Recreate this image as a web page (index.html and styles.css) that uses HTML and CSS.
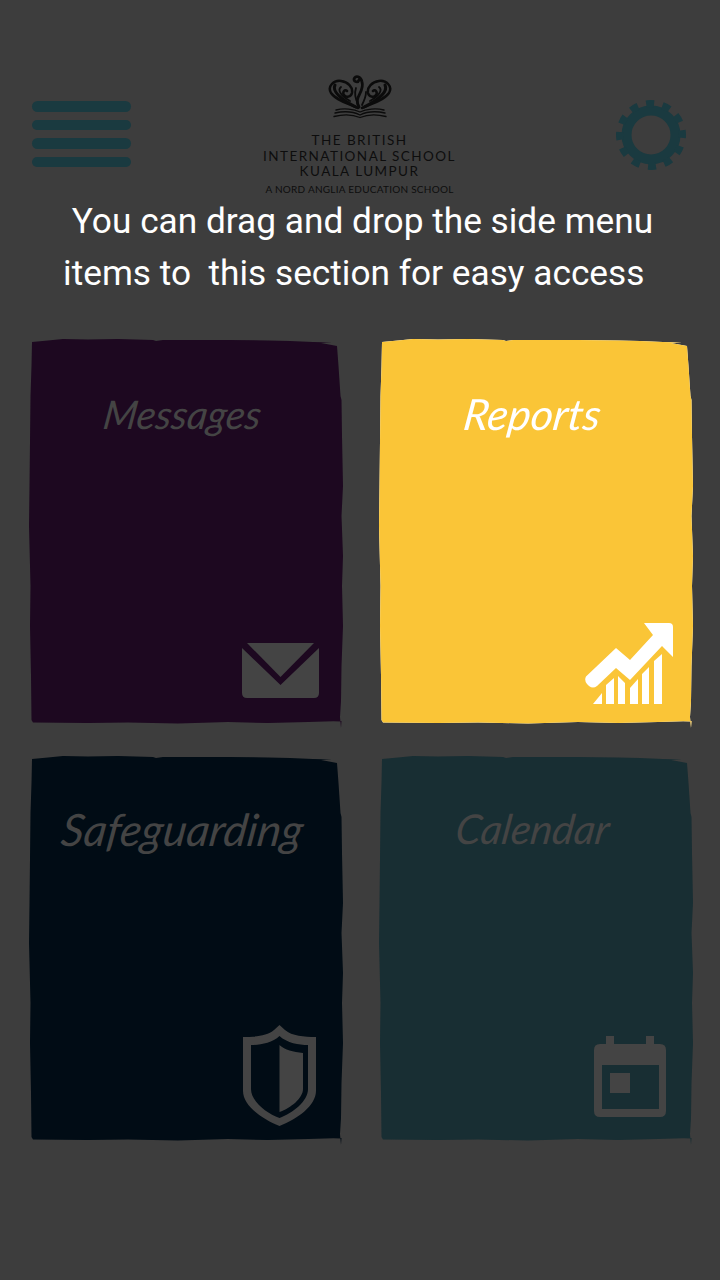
FILE: index.html
```html
<!DOCTYPE html>
<html lang="en">
<head>
<meta charset="utf-8">
<title>Home</title>
<link rel="stylesheet" href="styles.css">
</head>
<body>
<main class="screen">
  <header class="topbar">
    <div class="burger"><span></span><span></span><span></span><span></span></div>
    <div class="logo">
      <svg class="crest" viewBox="0 0 64 47" fill="none" stroke="#0b0b0b" stroke-linecap="round">
        <path d="M30 34C20 30 8 26 3 19C-1 12 6 6 13 7C20 8 25 13 24 19C23 23 18 24 16 21C14 18 17 15 19 17M34 34C44 30 56 26 61 19C65 12 58 6 51 7C44 8 39 13 40 19C41 23 46 24 48 21C50 18 47 15 45 17" stroke-width="2.500"/>
        <path d="M7 11C4 17 12 25 28 33M57 11C60 17 52 25 36 33" stroke-width="3"/>
        <path d="M13 13C9 16 13 22 22 27M51 13C55 16 51 22 42 27" stroke-width="1.800"/>
        <path d="M31 33C25 23 37 18 34 8C33 2 27 1 26 5C26 8 30 9 31 6" stroke-width="2.800"/>
        <path d="M28 14C26 20 28 26 30 30M38 18C38 23 36 27 34 31" stroke-width="1.800"/>
        <path d="M8 36C16 34 26 35 32 38C38 35 48 34 56 36M7 39C16 37 26 38 32 41C38 38 48 37 57 39M6 42.500C16 40 26 41 32 43.500C38 41 48 40 58 42.500" stroke-width="1.300"/>
      </svg>
      <p class="logo-line">THE BRITISH</p>
      <p class="logo-line">INTERNATIONAL SCHOOL</p>
      <p class="logo-line">KUALA LUMPUR</p>
      <p class="logo-tag">A NORD ANGLIA EDUCATION SCHOOL</p>
    </div>
    <svg class="gear" viewBox="-36 -36 72 72" aria-hidden="true">
      <circle class="gear-ring" r="24.500"/>
      <circle class="gear-teeth" r="31.500" transform="rotate(-2)"/>
    </svg>
  </header>

  <div class="intro">
    <p class="intro-line">You can drag and drop the side menu</p>
    <p class="intro-line">items to  this section for easy access  </p>
  </div>

  <section class="tiles">
    <article class="tile tile-messages">
      <div class="paint"></div>
      <h2 class="tile-title">Messages</h2>
      <svg class="tile-icon icon-mail" viewBox="0 0 77 55">
        <path d="M5 0H72L38.500 34Z"/>
        <path d="M0 5L38.500 42L77 5V50Q77 55 72 55H5Q0 55 0 50Z"/>
      </svg>
    </article>
    <article class="tile tile-reports">
      <div class="paint"></div>
      <h2 class="tile-title">Reports</h2>
      <svg class="tile-icon icon-chart" viewBox="0 0 90 82">
        <path d="M1 53.500L31 25L45 37L68 12L59 0H84Q88 0 88 4V34L77 23L45 57L31 45L12 63Q8 66 4 63L2 61Q-1 57 1 53.500Z"/>
        <path d="M8 81L17 70V81ZM21 81V62L29 55V81ZM33 81V53L40 60V81ZM45 81V65L53 56V81ZM57 81V51L64 44V81ZM69 81V38L77 31V81Z"/>
      </svg>
    </article>
    <article class="tile tile-safeguarding">
      <div class="paint"></div>
      <h2 class="tile-title">Safeguarding</h2>
      <svg class="tile-icon icon-shield" viewBox="0 0 76 102">
        <path fill-rule="evenodd" d="M37.500 0L43 5C50 11 62 12 74 12V66C74 80 56 94 37.500 101C19 94 1 80 1 66V12C13 12 25 11 32 5ZM37.500 11C30 18 18 20 9 20V64C9 76 24 88 37.500 93C51 88 66 76 66 64V20C57 20 45 18 37.500 11Z"/>
        <path d="M37.500 20C43 25 51 27 61 28V64C61 73 49 83 37.500 87Z"/>
      </svg>
    </article>
    <article class="tile tile-calendar">
      <div class="paint"></div>
      <h2 class="tile-title">Calendar</h2>
      <svg class="tile-icon icon-cal" viewBox="0 0 72 81">
        <path fill-rule="evenodd" d="M12 0H20V8H52V0H60V8H66Q72 8 72 14V75Q72 81 66 81H6Q0 81 0 75V14Q0 8 6 8H12ZM8 29V73H65V29Z"/>
        <path d="M16 37H36V57H16Z"/>
      </svg>
    </article>
  </section>
</main>
</body>
</html>
```

FILE: styles.css
```css
* { box-sizing: border-box; }
html, body { margin: 0; padding: 0; }
body { background: #3d3d3d; font-family: Roboto, "Liberation Sans", sans-serif; }
p, h2 { margin: 0; }

.screen { width: 720px; height: 1280px; overflow: hidden; padding-top: 74px; }

.topbar {
  display: grid;
  grid-template-columns: 1fr auto 1fr;
  align-items: start;
  padding: 0 33px 0 32px;
  height: 121px;
}
.burger { display: flex; flex-direction: column; gap: 8px; width: 99px; margin-top: 27px; }
.burger span { display: block; height: 10.500px; border-radius: 6px; background: #1a3a40; }

.logo { width: 196px; text-align: center; color: #0d0d0d; font-family: Lato, "Open Sans", sans-serif; }
.crest { display: block; width: 64px; height: 47px; margin: 0 auto 12px; }
.logo-line { font-size: 13.500px; line-height: 15.500px; letter-spacing: 1.450px; white-space: nowrap; }
.logo-tag { font-size: 10px; line-height: 12px; letter-spacing: 0.250px; margin-top: 3px; white-space: nowrap; }

.gear { justify-self: end; width: 72px; height: 72px; margin-top: 25px; fill: none; stroke: #1a3a40; }
.gear-ring { stroke-width: 10px; }
.gear-teeth { stroke-width: 7px; stroke-dasharray: 8 8.493; stroke-dashoffset: 4; }

.intro { padding-left: 5px; }
.intro-line {
  color: #fff;
  font-size: 35.250px;
  line-height: 52px;
  text-align: center;
  white-space: pre;
}

.tiles {
  display: grid;
  grid-template-columns: 316px 316px;
  grid-template-rows: 392px 392px;
  column-gap: 34px;
  row-gap: 25px;
  padding-left: 28px;
  margin-top: 37px;
}
.tile { position: relative; color: #444; }
.paint {
  position: absolute;
  inset: 0;
  clip-path: polygon(4px 6px, 20px 4.500px, 35px 3px, 60px 3.500px, 90px 3px, 125px 4px, 128px 5px, 135px 4px, 160px 4px, 200px 4px, 240px 4.500px, 262px 5px, 285px 6px, 304px 6.500px, 293px 7px, 309px 10px, 310.500px 30px, 312.500px 60px, 313.500px 64px, 314px 100px, 315px 150px, 313.500px 180px, 315px 220px, 314px 250px, 315px 290px, 313.500px 330px, 313px 365px, 312px 381px, 313px 392px, 313.500px 385px, 280px 386px, 240px 387px, 200px 386px, 150px 387.500px, 100px 386.500px, 60px 387px, 5px 386.500px, 3.500px 384px, 3px 340px, 2px 290px, 2.500px 250px, 1px 190px, 1.500px 150px, 2.500px 60px, 3.500px 30px);
}
.tile-messages .paint { background: #1d0820; }
.tile-reports .paint { background: #fac537; }
.tile-safeguarding .paint { background: #010c15; }
.tile-calendar .paint { background: #182e33; }
.tile-reports { color: #fff; filter: drop-shadow(0 0 0.600px #fff); }

.tile-title {
  position: relative;
  padding-top: 46px;
  text-align: center;
  font-family: Lato, "Open Sans", sans-serif;
  font-style: italic;
  font-weight: 400;
  line-height: 60px;
  transform: skewX(-8deg);
}
.tile-messages .tile-title { font-size: 39.500px; padding-top: 48px; }
.tile-reports .tile-title { font-size: 43px; padding-top: 48px; }
.tile-safeguarding .tile-title { font-size: 44.500px; }
.tile-calendar .tile-title { font-size: 41px; }

.tile-icon { position: absolute; fill: currentColor; }
.icon-mail { left: 214px; top: 307px; width: 77px; height: 55px; }
.icon-chart { left: 207px; top: 287px; width: 90px; height: 82px; }
.icon-shield { left: 214px; top: 272px; width: 76px; height: 102px; }
.icon-cal { left: 216px; top: 283px; width: 72px; height: 81px; }
```
